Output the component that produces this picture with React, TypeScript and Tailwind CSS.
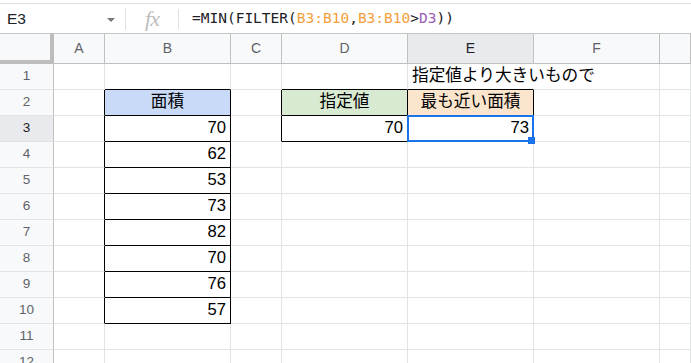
import React from "react";

const COLS = ["A", "B", "C", "D", "E", "F", "G"];
const ROWS = [1, 2, 3, 4, 5, 6, 7, 8, 9, 10, 11, 12];

type CellDef = { text: string; align?: "left" | "center" | "right"; bg?: string };

const data: Record<string, CellDef> = {
  E1: { text: "指定値より大きいもので", align: "left" },
  B2: { text: "面積", align: "center", bg: "bg-[#c9daf8]" },
  D2: { text: "指定値", align: "center", bg: "bg-[#d9ead3]" },
  E2: { text: "最も近い面積", align: "center", bg: "bg-[#fce5cd]" },
  D3: { text: "70", align: "right" },
  E3: { text: "73", align: "right" },
  B3: { text: "70", align: "right" },
  B4: { text: "62", align: "right" },
  B5: { text: "53", align: "right" },
  B6: { text: "73", align: "right" },
  B7: { text: "82", align: "right" },
  B8: { text: "70", align: "right" },
  B9: { text: "76", align: "right" },
  B10: { text: "57", align: "right" },
};

const inTable = (c: number, r: number) => {
  if (c === 1 && r >= 2 && r <= 10) return true;
  if ((c === 3 || c === 4) && (r === 2 || r === 3)) return true;
  return false;
};

function Cell({ c, r }: { c: number; r: number }) {
  const key = COLS[c] + r;
  const d = data[key];
  const blackRight = inTable(c, r) || inTable(c + 1, r);
  const blackBottom = inTable(c, r) || inTable(c, r + 1);
  const noRight = key === "E1";
  const rightCls = blackRight
    ? "border-r-black"
    : noRight
    ? "border-r-transparent"
    : "border-r-[#e2e3e3]";
  const bottomCls = blackBottom ? "border-b-black" : "border-b-[#e2e3e3]";
  const alignCls =
    d?.align === "center"
      ? "justify-center"
      : d?.align === "right"
      ? "justify-end pr-[4px]"
      : "justify-start pl-[4px]";
  const zCls = key === "E1" ? "z-10" : key === "E3" ? "z-20" : "";
  return (
    <div
      className={`relative flex items-center h-[26px] border-r border-b ${rightCls} ${bottomCls} ${
        d?.bg ?? ""
      } ${alignCls} ${zCls}`}
    >
      {d && (
        <span className="whitespace-nowrap text-[16.67px] leading-none text-black font-['Liberation_Sans','Noto_Sans_CJK_JP',sans-serif]">
          {d.text}
        </span>
      )}
      {key === "E3" && (
        <div className="absolute -left-px -top-px -right-px -bottom-px border-2 border-[#1a73e8] pointer-events-none">
          <div className="absolute right-[-3px] bottom-[-4px] w-[7px] h-[7px] bg-[#1a73e8]" />
        </div>
      )}
    </div>
  );
}

export default function App() {
  return (
    <div className="w-[691px] h-[363px] overflow-hidden bg-white font-['Liberation_Sans',sans-serif]">
      <div className="h-[3px]" />
      {/* Formula bar */}
      <div className="h-[31px] border-t border-b border-t-[#e0e0e0] border-b-[#c4c7c5] flex items-center">
        <div className="w-[125px] h-full flex items-center pl-[7px] pr-[10px] justify-between">
          <span className="text-[15.5px] text-[#202124] font-['Liberation_Sans',sans-serif]">E3</span>
          <span className="w-0 h-0 border-l-[4px] border-r-[4px] border-t-[4px] border-l-transparent border-r-transparent border-t-[#777] mt-[2px]" />
        </div>
        <div className="w-px h-[22px] bg-[#e0e0e0]" />
        <div className="w-[52px] flex items-center justify-center">
          <span className="text-[22px] italic text-[#bdbdbd] font-['Liberation_Serif',serif] leading-none tracking-[-1px]">
            fx
          </span>
        </div>
        <div className="w-px h-[20px] bg-[#e0e0e0]" />
        <div className="pl-[13px] text-[14.5px] text-[#202124] font-['DejaVu_Sans_Mono',monospace] whitespace-nowrap">
          =MIN(FILTER(<span className="text-[#f3a03d]">B3:B10</span>,
          <span className="text-[#f3a03d]">B3:B10</span>&gt;<span className="text-[#9d5bb5]">D3</span>))
        </div>
      </div>
      {/* Grid */}
      <div className="grid grid-cols-[54px_51px_126px_51px_126px_126px_126px_1fr]">
        <div className="relative h-[30px] bg-[#f8f9fa] border-r-[4px] border-b-[4px] border-[#bdbdbd]" />
        {COLS.map((col) => (
          <div
            key={col}
            className={`h-[30px] flex items-center justify-center border-r border-b border-[#c0c0c0] text-[14px] ${
              col === "E" ? "bg-[#e8eaed] text-[#202124]" : "bg-[#f8f9fa] text-[#5f6368]"
            }`}
          >
            {col === "G" ? "" : col}
          </div>
        ))}
        {ROWS.map((r) => (
          <React.Fragment key={r}>
            <div
              className={`h-[26px] flex items-center justify-center border-r border-b border-r-[#c0c0c0] border-b-[#e2e3e3] text-[13.5px] ${
                r === 3 ? "bg-[#e8eaed] text-[#202124]" : "bg-[#f8f9fa] text-[#5f6368]"
              }`}
            >
              {r}
            </div>
            {COLS.map((_, c) => (
              <Cell key={c} c={c} r={r} />
            ))}
          </React.Fragment>
        ))}
      </div>
    </div>
  );
}
